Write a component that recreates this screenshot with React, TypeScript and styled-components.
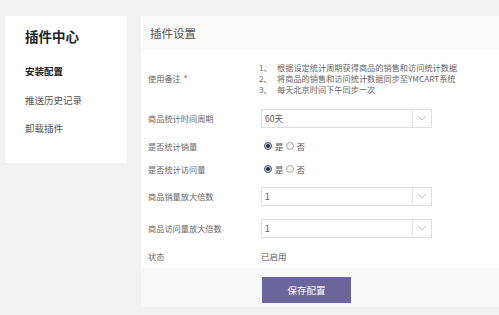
import React from "react"
import styled, {createGlobalStyle} from "styled-components"

const GlobalStyle = createGlobalStyle`
  html, body {
    margin: 0;
    padding: 0;
    background: #f2f2f2;
    font-family: "Noto Sans CJK SC", "Noto Sans", sans-serif;
  }
`

const Page = styled.div`
  display: flex;
  align-items: flex-start;
  gap: 14px;
  padding: 16px 0 0 5px;
  width: 499px;
  height: 315px;
  box-sizing: border-box;
  overflow: hidden;
`

const Sidebar = styled.nav`
  width: 122px;
  height: 147px;
  background: #fff;
  box-sizing: border-box;
  padding: 10px 0 0 20px;
`

const SideTitle = styled.h1`
  margin: 0 0 18px;
  font-size: 13.5px;
  line-height: 20px;
  font-weight: 700;
  color: #222;
`

const SideItem = styled.div<{ $active?: boolean }>`
  font-size: 9.5px;
  line-height: 14px;
  margin-bottom: 14.5px;
  color: ${p => p.$active ? "#222" : "#555"};
  font-weight: ${p => p.$active ? 600 : 400};
`

const Panel = styled.section`
  flex: 1;
  height: 291px;
  display: flex;
  flex-direction: column;
  background: #fff;
`

const PanelHeader = styled.header`
  height: 34px;
  display: flex;
  align-items: center;
  padding-left: 9px;
  background: #fafafa;
  font-size: 11.5px;
  color: #555;
`

const PanelBody = styled.div`
  flex: 1;
  padding: 6px 0 0 7px;
`

const Row = styled.div<{ $h: number }>`
  display: flex;
  align-items: center;
  height: ${p => p.$h}px;
`

const Label = styled.div`
  width: 113px;
  flex-shrink: 0;
  font-size: 8.2px;
  color: #666;
`

const Star = styled.span`
  color: #e4393c;
  margin-left: 3px;
`

const Notes = styled.ol`
  margin: 0;
  padding: 0;
  list-style: none;
  font-size: 8.2px;
  line-height: 11px;
  color: #666;
`

const Note = styled.li`
  display: flex;
  margin-left: -2px;
  white-space: nowrap;
`

const NoteNum = styled.span`
  flex-shrink: 0;
  width: 18px;
`

const Select = styled.div`
  width: 171px;
  height: 19px;
  box-sizing: border-box;
  border: 1px solid #ddd;
  display: flex;
  align-items: center;
  font-size: 8.5px;
  color: #555;
`

const SelectValue = styled.span`
  flex: 1;
  padding-left: 3px;
`

const SelectArrow = styled.span`
  width: 18px;
  height: 100%;
  border-left: 1px solid #e6e6e6;
  display: flex;
  align-items: center;
  justify-content: center;
`

const RadioGroup = styled.div`
  display: flex;
  align-items: center;
  font-size: 8.5px;
  color: #555;
  padding-left: 3px;
`

const Radio = styled.span<{ $checked?: boolean }>`
  width: 8px;
  height: 8px;
  border-radius: 50%;
  box-sizing: border-box;
  border: 1px solid ${p => p.$checked ? "#3d4a5c" : "#aaa"};
  background: ${p => p.$checked ? "radial-gradient(circle, #2f3a4a 0 1.8px, #c9d6e6 2.2px)" : "#f4f4f4"};
  margin-right: 3px;
`

const RadioText = styled.span`
  margin-right: 2px;
`

const Value = styled.div`
  font-size: 8.5px;
  color: #555;
`

const PanelFooter = styled.footer`
  height: 39px;
  background: #f8f8f8;
  padding: 7px 0 0 121px;
  box-sizing: border-box;
`

const SaveButton = styled.button`
  width: 89px;
  height: 26px;
  border: none;
  background: #6b659b;
  color: #fff;
  font-family: inherit;
  font-size: 9.5px;
  padding: 0;
`

const Chevron = () => (
    <svg width="8" height="5" viewBox="0 0 8 5">
        <path d="M0.5 0.5 L4 4 L7.5 0.5" fill="none" stroke="#bbb" strokeWidth="0.9"/>
    </svg>
)

const Dropdown = ({value}: { value: string }) => (
    <Select>
        <SelectValue>{value}</SelectValue>
        <SelectArrow><Chevron/></SelectArrow>
    </Select>
)

const YesNo = () => (
    <RadioGroup>
        <Radio $checked/>
        <RadioText>是</RadioText>
        <Radio/>
        <RadioText>否</RadioText>
    </RadioGroup>
)

const notes = [
    "根据设定统计周期获得商品的销售和访问统计数据",
    "将商品的销售和访问统计数据同步至YMCART系统",
    "每天北京时间下午同步一次",
]

const App = () => {
    return (
        <>
            <GlobalStyle/>
            <Page>
                <Sidebar>
                    <SideTitle>插件中心</SideTitle>
                    <SideItem $active>安装配置</SideItem>
                    <SideItem>推送历史记录</SideItem>
                    <SideItem>卸载插件</SideItem>
                </Sidebar>

                <Panel>
                    <PanelHeader>插件设置</PanelHeader>
                    <PanelBody>
                        <Row $h={44}>
                            <Label>使用备注<Star>*</Star></Label>
                            <Notes>
                                {notes.map((n, i) => (
                                    <Note key={i}><NoteNum>{i + 1}、</NoteNum>{n}</Note>
                                ))}
                            </Notes>
                        </Row>
                        <Row $h={36}>
                            <Label>商品统计时间周期</Label>
                            <Dropdown value="60天"/>
                        </Row>
                        <Row $h={20}>
                            <Label>是否统计销量</Label>
                            <YesNo/>
                        </Row>
                        <Row $h={26}>
                            <Label>是否统计访问量</Label>
                            <YesNo/>
                        </Row>
                        <Row $h={28}>
                            <Label>商品销量放大倍数</Label>
                            <Dropdown value="1"/>
                        </Row>
                        <Row $h={36}>
                            <Label>商品访问量放大倍数</Label>
                            <Dropdown value="1"/>
                        </Row>
                        <Row $h={20}>
                            <Label>状态</Label>
                            <Value>已启用</Value>
                        </Row>
                    </PanelBody>
                    <PanelFooter>
                        <SaveButton>保存配置</SaveButton>
                    </PanelFooter>
                </Panel>
            </Page>
        </>
    )
}

export default App
